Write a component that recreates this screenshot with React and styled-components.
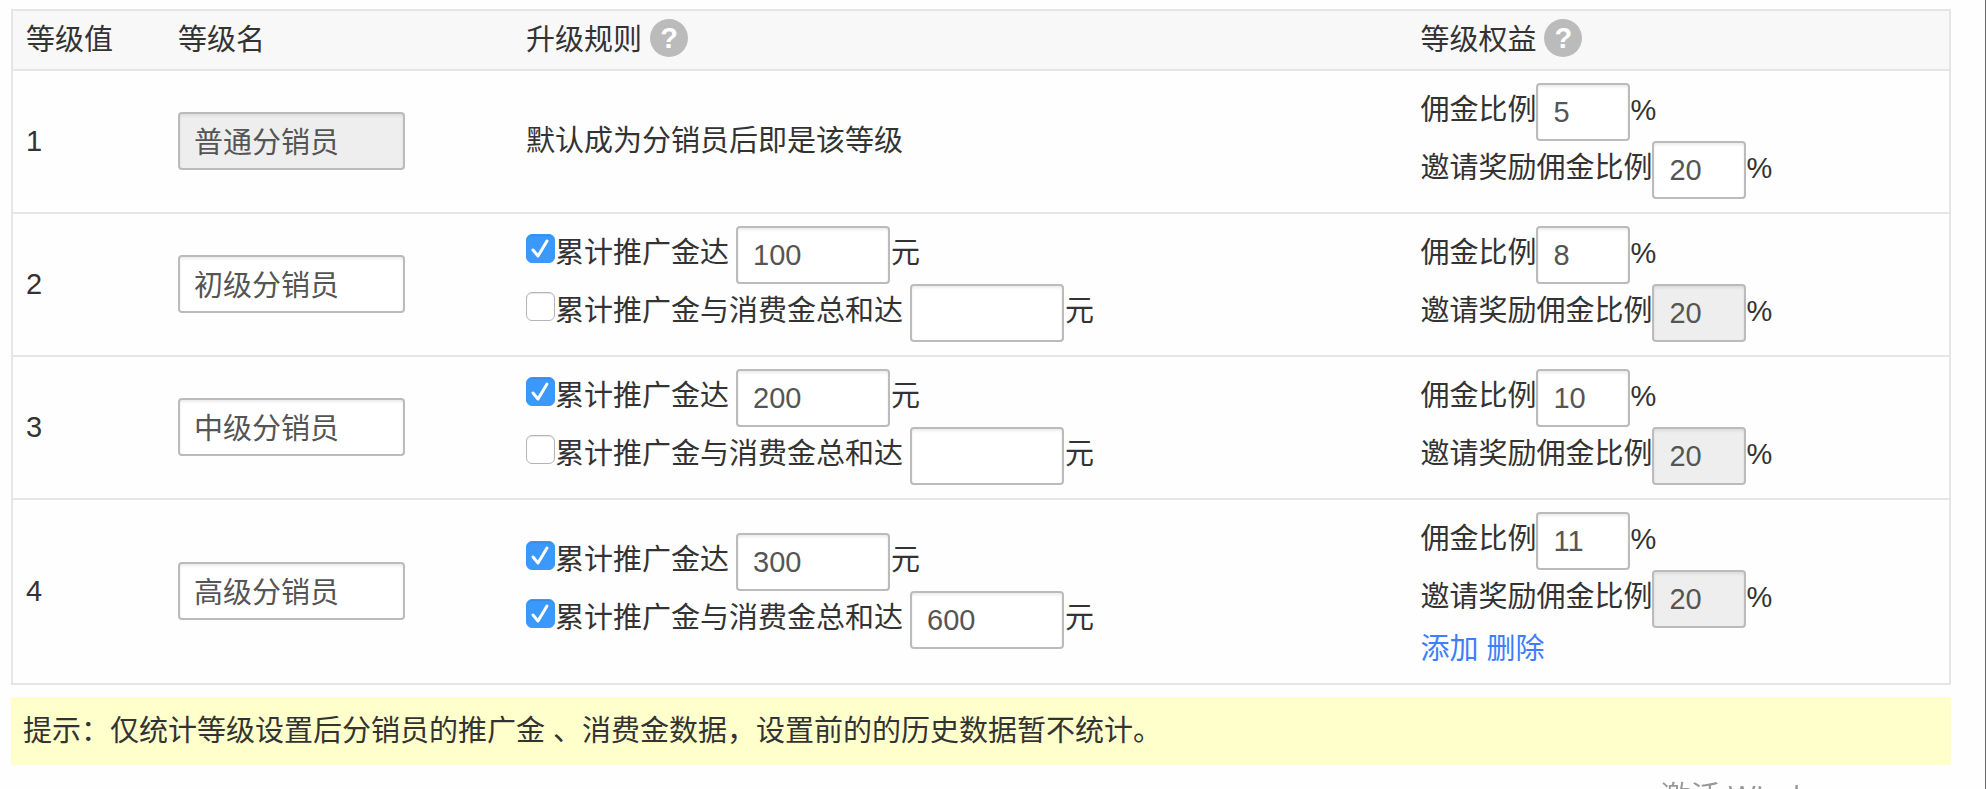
import { useState } from "react";
import styled, { createGlobalStyle } from "styled-components";

const GlobalStyle = createGlobalStyle`
  * {
    box-sizing: border-box;
  }
  body {
    margin: 0;
    background-color: #fefefe;
    color: #333;
    font-family: "Liberation Sans", "Noto Sans CJK SC", sans-serif;
    font-size: 29px;
    line-height: 44px;
  }
`;
const Page = styled.main`
  min-height: 100vh;
  padding: 9px 34px 24px 11px;
  border-right: 1px solid #6b6b6b;
`;
const LevelTable = styled.table`
  width: 100%;
  table-layout: fixed;
  border: 2px solid #e5e5e5;
  border-spacing: 0;
`;
const HeadCell = styled.th`
  width: ${(props) => props.$width};
  height: 58px;
  padding: 0 13px;
  background-color: #f8f8f8;
  font-weight: normal;
  text-align: left;
  vertical-align: middle;
`;
const HeadContent = styled.div`
  display: flex;
  align-items: center;
  gap: 8px;
`;
const Cell = styled.td`
  padding: 12px 13px 13px;
  border-top: 2px solid #e5e5e5;
  vertical-align: middle;
`;
const HelpButton = styled.button`
  width: 38px;
  height: 38px;
  margin-bottom: 4px;
  padding: 0;
  border: none;
  border-radius: 50%;
  background-color: #bbb;
  color: white;
  font-family: inherit;
  font-size: 29px;
  font-weight: bold;
  line-height: 38px;
`;
const Line = styled.div`
  display: flex;
  align-items: flex-start;
  height: 58px;
  line-height: 54px;
  white-space: nowrap;
`;
const TextInput = styled.input`
  width: ${(props) => props.$width};
  height: 58px;
  padding: 0 15px;
  border: 2px solid #bbb;
  border-radius: 4px;
  background-color: white;
  box-shadow: inset 0 2px 3px rgba(0, 0, 0, 0.08);
  color: #555;
  font-family: inherit;
  font-size: 29px;
  &:disabled {
    background-color: #eee;
  }
`;
const NameInput = styled(TextInput)`
  display: block;
  padding: 0 14px 2px;
`;
const RuleLabel = styled.label`
  display: flex;
  margin-right: 7px;
`;
const Unit = styled.span`
  padding-left: 1px;
`;
const Checkbox = styled.input`
  appearance: none;
  width: 29px;
  height: 29px;
  margin: 8px 0 0;
  border: 1px solid #b5b5b5;
  border-radius: 6px;
  background-color: white;
  box-shadow: inset 0 1px 1px rgba(0, 0, 0, 0.1);
  &:checked {
    border-color: #3b99fc;
    background: #3b99fc
      url("data:image/svg+xml,%3Csvg xmlns='http://www.w3.org/2000/svg' viewBox='0 0 29 29'%3E%3Cpath d='M7 16l5 6L21 7' fill='none' stroke='white' stroke-width='3' stroke-linecap='round' stroke-linejoin='round'/%3E%3C/svg%3E")
      center / 29px 29px no-repeat;
  }
`;
const Actions = styled.div`
  display: flex;
  gap: 8px;
  line-height: 42px;
`;
const ActionLink = styled.a`
  color: #3d7eff;
  text-decoration: none;
`;
const Tip = styled.p`
  margin: 12px 0 0;
  padding: 12px;
  background-color: #ffc;
`;
const Watermark = styled.div`
  position: fixed;
  right: 130px;
  bottom: -29px;
  color: #999;
  font-family: "Open Sans", "Noto Sans CJK SC", sans-serif;
  font-size: 30px;
  white-space: nowrap;
`;

const levels = [
  {
    value: 1,
    name: "普通分销员",
    locked: true,
    commission: "5",
    invite: "20",
  },
  {
    value: 2,
    name: "初级分销员",
    promotion: "100",
    total: "",
    commission: "8",
    invite: "20",
  },
  {
    value: 3,
    name: "中级分销员",
    promotion: "200",
    total: "",
    commission: "10",
    invite: "20",
  },
  {
    value: 4,
    name: "高级分销员",
    promotion: "300",
    total: "600",
    commission: "11",
    invite: "20",
  },
];

const Rule = ({ label, amount }) => {
  const [checked, setChecked] = useState(amount !== "");
  return (
    <Line>
      <RuleLabel>
        <Checkbox
          type="checkbox"
          checked={checked}
          onChange={(e) => setChecked(e.target.checked)}
        />
        {label}
      </RuleLabel>
      <TextInput $width="154px" aria-label={label} defaultValue={amount} />
      <Unit>元</Unit>
    </Line>
  );
};

const Rate = ({ id, label, value, disabled }) => (
  <Line>
    <label htmlFor={id}>{label}</label>
    <TextInput $width="94px" id={id} defaultValue={value} disabled={disabled} />
    <span>%</span>
  </Line>
);

const LevelRow = ({ level, isLast }) => (
  <tr>
    <Cell>{level.value}</Cell>
    <Cell>
      <NameInput
        $width="227px"
        aria-label="等级名"
        defaultValue={level.name}
        disabled={level.locked}
      />
    </Cell>
    <Cell>
      {level.locked ? (
        "默认成为分销员后即是该等级"
      ) : (
        <>
          <Rule label="累计推广金达" amount={level.promotion} />
          <Rule label="累计推广金与消费金总和达" amount={level.total} />
        </>
      )}
    </Cell>
    <Cell>
      <Rate
        id={`commission-${level.value}`}
        label="佣金比例"
        value={level.commission}
      />
      <Rate
        id={`invite-${level.value}`}
        label="邀请奖励佣金比例"
        value={level.invite}
        disabled={!level.locked}
      />
      {isLast && (
        <Actions>
          <ActionLink href="#add">添加</ActionLink>
          <ActionLink href="#delete">删除</ActionLink>
        </Actions>
      )}
    </Cell>
  </tr>
);

const App = () => {
  return (
    <Page>
      <GlobalStyle />
      <LevelTable>
        <thead>
          <tr>
            <HeadCell $width="152px">等级值</HeadCell>
            <HeadCell $width="348px">等级名</HeadCell>
            <HeadCell $width="46.2%">
              <HeadContent>
                升级规则
                <HelpButton aria-label="升级规则说明">?</HelpButton>
              </HeadContent>
            </HeadCell>
            <HeadCell>
              <HeadContent>
                等级权益
                <HelpButton aria-label="等级权益说明">?</HelpButton>
              </HeadContent>
            </HeadCell>
          </tr>
        </thead>
        <tbody>
          {levels.map((level, index) => (
            <LevelRow
              key={level.value}
              level={level}
              isLast={index === levels.length - 1}
            />
          ))}
        </tbody>
      </LevelTable>
      <Tip>
        提示：仅统计等级设置后分销员的推广金 、消费金数据，设置前的的历史数据暂不统计。
      </Tip>
      <Watermark>激活 Windows</Watermark>
    </Page>
  );
};

export default App;
